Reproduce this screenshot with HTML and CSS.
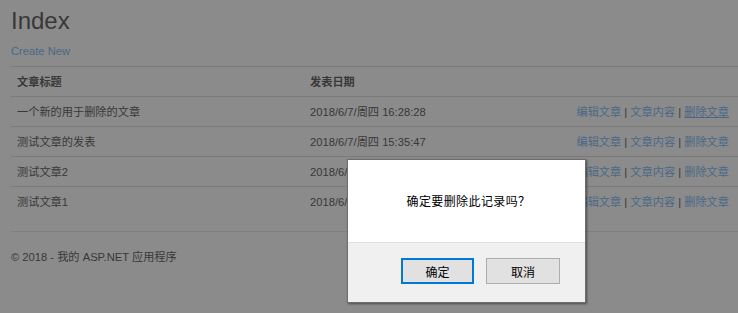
FILE: index.html
```html
<!DOCTYPE html>
<html lang="zh-CN">
<head>
    <meta charset="UTF-8">
    <title>Index</title>
    <link rel="stylesheet" href="styles.css">
</head>
<body>

    <div class="container">
        <h2 class="title">Index</h2>
        <p class="create"><a href="#">Create New</a></p>

        <table class="table">
            <tr>
                <th class="col-title">文章标题</th>
                <th>发表日期</th>
                <th></th>
            </tr>
            <tr>
                <td>一个新的用于删除的文章</td>
                <td>2018/6/7/周四 16:28:28</td>
                <td class="actions"><a href="#">编辑文章</a> | <a href="#">文章内容</a> | <a href="#" class="hover">删除文章</a></td>
            </tr>
            <tr>
                <td>测试文章的发表</td>
                <td>2018/6/7/周四 15:35:47</td>
                <td class="actions"><a href="#">编辑文章</a> | <a href="#">文章内容</a> | <a href="#">删除文章</a></td>
            </tr>
            <tr>
                <td>测试文章2</td>
                <td>2018/6/7/周四 15:20:11</td>
                <td class="actions"><a href="#">编辑文章</a> | <a href="#">文章内容</a> | <a href="#">删除文章</a></td>
            </tr>
            <tr>
                <td>测试文章1</td>
                <td>2018/6/7/周四 15:18:02</td>
                <td class="actions"><a href="#">编辑文章</a> | <a href="#">文章内容</a> | <a href="#">删除文章</a></td>
            </tr>
        </table>

        <hr class="rule">
        <footer class="footer">© 2018 - 我的 ASP.NET 应用程序</footer>
    </div>

    <!-- confirm() dialog on top of the dimmed page -->
    <div class="dialog">
        <div class="dialog-body">确定要删除此记录吗？</div>
        <div class="dialog-buttons">
            <button class="btn btn-default">确定</button>
            <button class="btn">取消</button>
        </div>
    </div>

</body>
</html>
```

FILE: styles.css
```css
body {
    margin: 0;
    background: #8b8b8b;
    color: #383838;
    font-family: "Liberation Sans", Arial, "Noto Sans CJK SC", sans-serif;
    font-size: 11.2px;
    line-height: 16px;
}
a {
    color: #4a6886;
    text-decoration: none;
}
.container {
    padding-left: 11px;
}
.title {
    margin: 8px 0 0;
    font-size: 24px;
    font-weight: normal;
    line-height: 26px;
}
.create {
    margin: 9px 0 0;
    height: 23px;
}
.table {
    width: 727px;
    border-collapse: collapse;
    margin-bottom: 15px;
}
.table th,
.table td {
    height: 29px;
    padding: 0 6px;
    text-align: left;
    vertical-align: middle;
    border-top: 1px solid #7a7a7a;
}
.table th {
    font-weight: bold;
}
.col-title {
    width: 281px;
}
.table .actions {
    text-align: right;
    padding-right: 9px;
}
.hover {
    text-decoration: underline;
}
.rule {
    margin: 0;
    border: 0;
    border-top: 1px solid #7f7f7f;
}
.footer {
    padding-top: 17px;
}
.dialog {
    position: absolute;
    left: 347px;
    top: 159px;
    width: 237px;
    border: 1px solid #6e6e6e;
    background: #f0f0f0;
    box-shadow: 1px 1px 2px rgba(0, 0, 0, 0.45);
    font-family: "Noto Sans CJK SC", sans-serif;
}
.dialog-body {
    height: 82px;
    background: #fff;
    border-bottom: 1px solid #e0e0e0;
    font-size: 12px;
    line-height: 82px;
    text-align: center;
    color: #000;
    padding-left: 4px;
    letter-spacing: 0.4px;
    text-spacing-trim: space-all;
}
.dialog-buttons {
    height: 59px;
    display: flex;
    justify-content: flex-end;
    align-items: flex-start;
    gap: 12px;
    padding: 15px 25px 0 0;
    box-sizing: border-box;
}
.btn {
    width: 74px;
    height: 26px;
    padding: 0;
    background: #e1e1e1;
    border: 1px solid #adadad;
    font-family: "Noto Sans CJK SC", sans-serif;
    font-size: 12px;
    color: #000;
}
.btn-default {
    border: 2px solid #0078d7;
    width: 73px;
}
```
